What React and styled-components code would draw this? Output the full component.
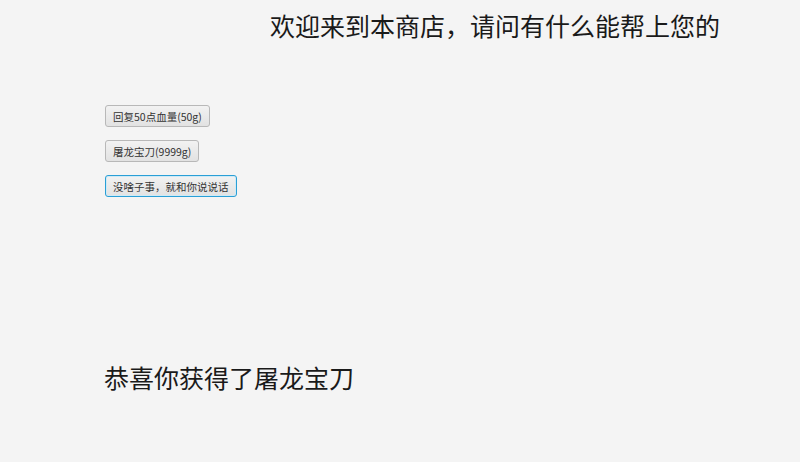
import React from "react";
import styled, { createGlobalStyle } from "styled-components";

const Global = createGlobalStyle`
  html, body { margin: 0; padding: 0; background: #f4f4f4; }
  body { font-family: "Noto Sans CJK SC", "Noto Sans", sans-serif; }
`;

const Page = styled.div`
  width: 800px;
  height: 462px;
  background: #f4f4f4;
  display: flex;
  flex-direction: column;
  box-sizing: border-box;
`;

const Title = styled.h1`
  margin: 0;
  padding: 8px 0 0 270px;
  font-size: 25px;
  line-height: 34px;
  font-weight: 400;
  color: #1a1a1a;
  white-space: nowrap;
`;

const Menu = styled.div`
  display: flex;
  flex-direction: column;
  align-items: flex-start;
  gap: 13px;
  padding: 63px 0 0 105px;
`;

const Button = styled.button`
  height: 22px;
  box-sizing: border-box;
  padding: 0 7px;
  font-family: "Noto Sans CJK SC", "Noto Sans", sans-serif;
  font-size: 10.5px;
  color: #333;
  border-radius: 3px;
  background: linear-gradient(#f2f2f2, #e2e2e2);
  border: 1px solid ${(p) => (p.$focused ? "#2a9fd6" : "#b8b8b8")};
  box-shadow: ${(p) => (p.$focused ? "0 0 0 1px #cfeaf6 inset" : "none")};
  cursor: pointer;
  outline: none;
`;

const Result = styled.p`
  margin: 0;
  padding: 163px 0 0 104px;
  font-size: 25px;
  line-height: 34px;
  font-weight: 400;
  color: #1a1a1a;
`;

export default function App() {
  return (
    <Page>
      <Global />
      <Title>欢迎来到本商店，请问有什么能帮上您的</Title>
      <Menu>
        <Button>回复50点血量(50g)</Button>
        <Button>屠龙宝刀(9999g)</Button>
        <Button $focused>没啥子事，就和你说说话</Button>
      </Menu>
      <Result>恭喜你获得了屠龙宝刀</Result>
    </Page>
  );
}
